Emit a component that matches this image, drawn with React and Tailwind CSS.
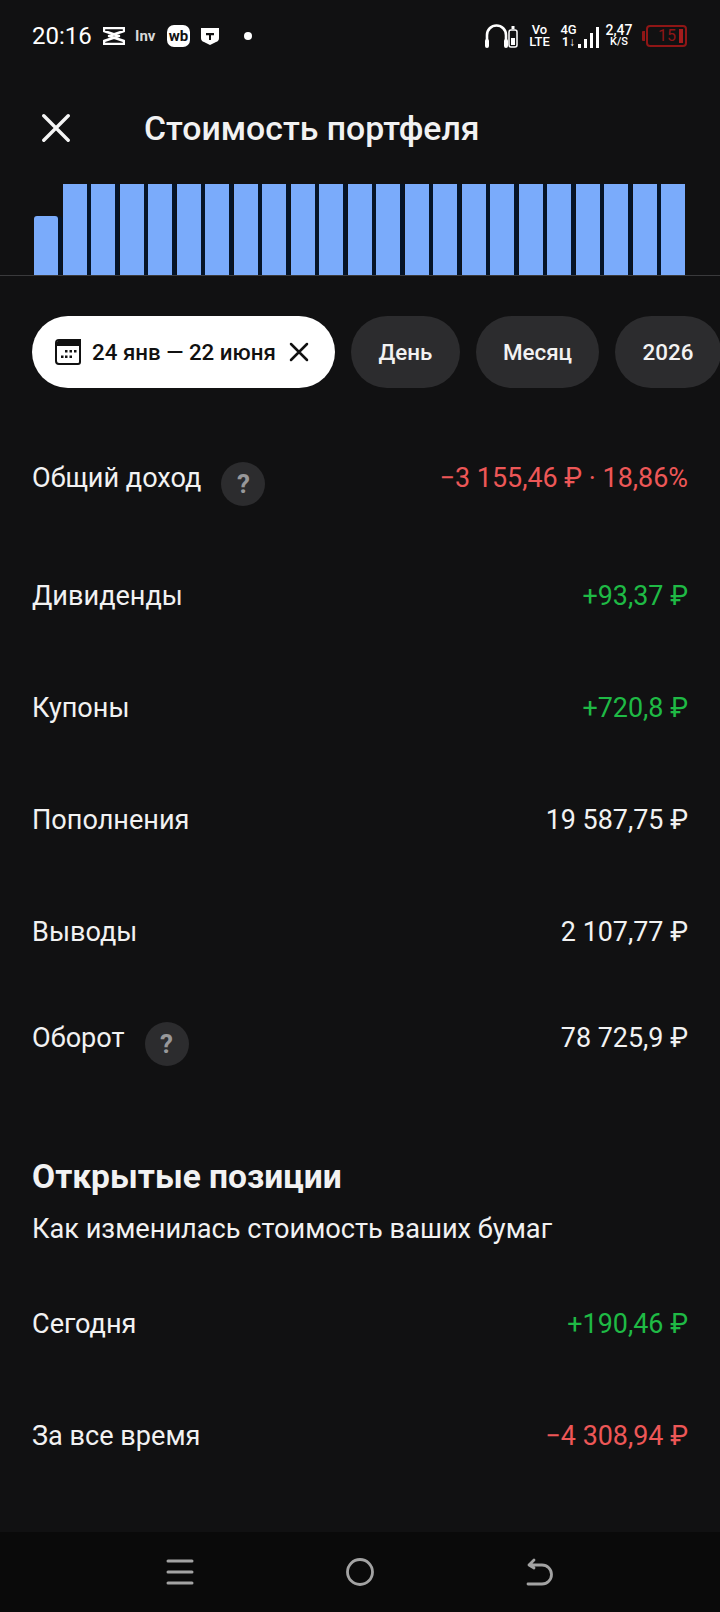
import React from "react";

const Help = () => (
  <div className="w-[44px] h-[44px] rounded-full bg-[#2c2c2e] flex items-center justify-center text-[#98989a] text-[26px] font-bold leading-none">?</div>
);

const Row = ({ label, value, color = "text-[#f2f2f2]" }) => (
  <div className="h-[112px] flex items-center justify-between px-[32px]">
    <span className="text-[27.100px] leading-[34px] text-[#f2f2f2]">{label}</span>
    <span className={`text-[26.900px] leading-[34px] ${color}`}>{value}</span>
  </div>
);

const HelpRow = ({ label, value, color = "text-[#f2f2f2]", gap }) => (
  <div className="h-[44px] flex items-start justify-between px-[32px]">
    <div className={`flex items-start ${gap}`}>
      <span className="text-[27.100px] leading-[32px] text-[#f2f2f2]">{label}</span>
      <Help />
    </div>
    <span className={`text-[26.900px] leading-[32px] ${color}`}>{value}</span>
  </div>
);

const Chip = ({ children, w }) => (
  <div className={`h-[72px] pt-[1px] shrink-0 rounded-full bg-[#2c2c2e] flex items-center justify-center text-[#f2f2f2] text-[22.400px] font-medium ${w}`}>{children}</div>
);

const bars = Array.from({ length: 23 }, (_, i) => i);

export default function App() {
  return (
    <div className="w-[720px] h-[1612px] overflow-hidden bg-[#111112] flex flex-col font-['Roboto',sans-serif]">
      {/* status bar */}
      <div className="h-[72px] shrink-0 relative flex items-center pl-[32px] pr-[33px] text-white">
        <span className="text-[24px] leading-none w-[71px]">20:16</span>
        <svg width="22" height="18" viewBox="0 0 22 18">
          <path d="M1 1h20v3L6 9l15 5v3H1v-3l15-5L1 4z" fill="none" stroke="#fff" strokeWidth="2.400" strokeLinejoin="round" />
        </svg>
        <span className="ml-[10px] text-[15px] font-bold leading-none text-[#d8d8d8] w-[22px]">Inv</span>
        <div className="ml-[10px] w-[23px] h-[22px] rounded-[7px] bg-white text-[#111] text-[15px] font-bold flex items-center justify-center leading-none">wb</div>
        <svg width="18" height="18" viewBox="0 0 18 18" className="ml-[11px]">
          <path d="M0 1h18v10q0 3-3 4l-6 3-6-3q-3-1-3-4z" fill="#fff" />
          <path d="M5 6h8v2.200h-3V13H8V8.200H5z" fill="#111112" />
        </svg>
        <div className="ml-[25px] w-[8px] h-[8px] rounded-full bg-white" />
        <div className="ml-auto flex items-center h-full">
          <svg width="34" height="26" viewBox="0 0 34 26">
            <path d="M3 22V12a9.500 9.500 0 0 1 19 0v10" fill="none" stroke="#fff" strokeWidth="2.600" />
            <rect x="1" y="16" width="4" height="9" rx="2" fill="#fff" />
            <rect x="20" y="16" width="4" height="9" rx="2" fill="#fff" />
            <rect x="25" y="7" width="8" height="17" rx="2" fill="none" stroke="#fff" strokeWidth="1.500" />
            <rect x="27.500" y="3" width="3" height="3" fill="#fff" />
            <rect x="27" y="15" width="4" height="7" fill="#fff" />
          </svg>
          <div className="ml-[11px] w-[21px] flex flex-col items-center text-[13px] font-medium leading-[12px]">
            <span>Vo</span><span>LTE</span>
          </div>
          <div className="ml-[10px] flex items-end">
            <div className="flex flex-col items-center text-[13px] font-medium leading-[12px] w-[17px]">
              <span>4G</span><span className="text-[12px] font-bold">1↓</span>
            </div>
            <div className="ml-[1px] flex items-end gap-[3px] h-[21px]">
              <div className="w-[3px] h-[4px] bg-white" />
              <div className="w-[3px] h-[9px] bg-white" />
              <div className="w-[3px] h-[15px] bg-white" />
              <div className="w-[3px] h-[21px] bg-white" />
            </div>
          </div>
          <div className="ml-[6px] w-[28px] flex flex-col items-center font-medium leading-[11px]">
            <span className="text-[14px]">2,47</span><span className="text-[11px]">K/S</span>
          </div>
          <div className="ml-[9px] flex items-center">
            <div className="w-[3px] h-[10px] bg-[#8f1616] rounded-l-[1px]" />
            <div className="ml-[1px] w-[41px] h-[22px] rounded-[4px] border-2 border-[#8f1616] flex items-center justify-end pr-[2px]">
              <span className="text-[16px] leading-none text-[#8f1616] mr-[3px]">15</span>
              <div className="w-[4px] h-[14px] bg-[#a51c1c]" />
            </div>
          </div>
        </div>
      </div>

      {/* header */}
      <div className="h-[112px] shrink-0 flex items-center pl-[42px]">
        <svg width="28" height="28" viewBox="0 0 28 28">
          <path d="M1.800 1.800l24.400 24.400M26.200 1.800L1.800 26.200" stroke="#f5f5f5" strokeWidth="3.400" strokeLinecap="round" />
        </svg>
        <span className="ml-[74px] mt-[2px] text-[33.800px] font-medium text-[#f2f2f2] leading-none">Стоимость портфеля</span>
      </div>

      {/* chart */}
      <div className="h-[92px] shrink-0 border-b border-[#3a3a3c] pl-[34px] flex items-end gap-[4.200px]">
        {bars.map((i) => (
          <div key={i} className={`w-[24.320px] bg-[#7aabfb] ${i === 22 ? "" : "shadow-[4.200px_0_0_#051428]"} ${i === 0 ? "h-[59px] rounded-t-[3px]" : "h-[91px]"}`} />
        ))}
      </div>

      {/* chips */}
      <div className="mt-[40px] shrink-0 pl-[32px] flex gap-[16px]">
        <div className="h-[72px] w-[303px] shrink-0 rounded-full bg-white flex items-center pl-[23px] text-[#111] text-[22.300px]">
          <svg width="26" height="26" viewBox="0 0 26 26">
            <path d="M4 1h21v22a2 2 0 0 1-2 2H4a3 3 0 0 1-3-3V4a3 3 0 0 1 3-3z" fill="none" stroke="#111" strokeWidth="2" />
            <path d="M3 2h21v5H2V3z" fill="#111" />
            <g fill="#111">
              <rect x="10" y="11" width="2.500" height="2.500" /><rect x="14.500" y="11" width="2.500" height="2.500" /><rect x="19" y="11" width="2.500" height="2.500" />
              <rect x="6" y="16.500" width="2.500" height="2.500" /><rect x="10" y="16.500" width="2.500" height="2.500" /><rect x="14.500" y="16.500" width="2.500" height="2.500" />
            </g>
          </svg>
          <span className="ml-[11px] mt-[1px] whitespace-nowrap font-medium">24 янв — 22 июня</span>
          <svg width="20" height="20" viewBox="0 0 20 20" className="ml-[13px]">
            <path d="M2 2l16 16M18 2L2 18" stroke="#111" strokeWidth="2.500" strokeLinecap="round" />
          </svg>
        </div>
        <Chip w="w-[109px]">День</Chip>
        <Chip w="w-[123px]">Месяц</Chip>
        <Chip w="w-[106px]">2026</Chip>
      </div>

      {/* rows */}
      <div className="mt-[74px] shrink-0">
        <HelpRow label="Общий доход" value="−3 155,46 ₽ · 18,86%" color="text-[#ed5757]" gap="gap-[20px]" />
      </div>
      <div className="mt-[34px] shrink-0">
        <Row label="Дивиденды" value="+93,37 ₽" color="text-[#1fba45]" />
        <Row label="Купоны" value="+720,8 ₽" color="text-[#1fba45]" />
        <Row label="Пополнения" value="19 587,75 ₽" />
        <Row label="Выводы" value="2 107,77 ₽" />
      </div>
      <div className="mt-[34px] shrink-0">
        <HelpRow label="Оборот" value="78 725,9 ₽" gap="gap-[20px]" />
      </div>

      {/* open positions */}
      <div className="mt-[88px] shrink-0 px-[32px]">
        <h2 className="text-[33.550px] leading-[46px] font-bold text-[#f2f2f2]">Открытые позиции</h2>
        <p className="mt-[12px] text-[27.180px] leading-[34px] text-[#f2f2f2]">Как изменилась стоимость ваших бумаг</p>
      </div>
      <div className="mt-[22px] shrink-0">
        <Row label="Сегодня" value="+190,46 ₽" color="text-[#1fba45]" />
        <Row label="За все время" value="−4 308,94 ₽" color="text-[#ed5757]" />
      </div>

      {/* nav bar */}
      <div className="mt-auto h-[80px] shrink-0 bg-[#0a0a0a] flex items-center">
        <svg width="28" height="28" viewBox="0 0 28 28" className="ml-[166px]">
          <path d="M2 3h24M2 14h24M2 25h24" stroke="#a3a3a3" strokeWidth="3" strokeLinecap="round" />
        </svg>
        <svg width="28" height="28" viewBox="0 0 28 28" className="ml-[152px]">
          <circle cx="14" cy="14" r="12.500" fill="none" stroke="#a3a3a3" strokeWidth="2.800" />
        </svg>
        <svg width="28" height="28" viewBox="0 0 28 28" className="ml-[152px]">
          <path d="M2 26h14a9 9 0 0 0 0-19H3M8 2L3 7l5 3" fill="none" stroke="#a3a3a3" strokeWidth="2.800" strokeLinecap="round" strokeLinejoin="round" />
        </svg>
      </div>
    </div>
  );
}
